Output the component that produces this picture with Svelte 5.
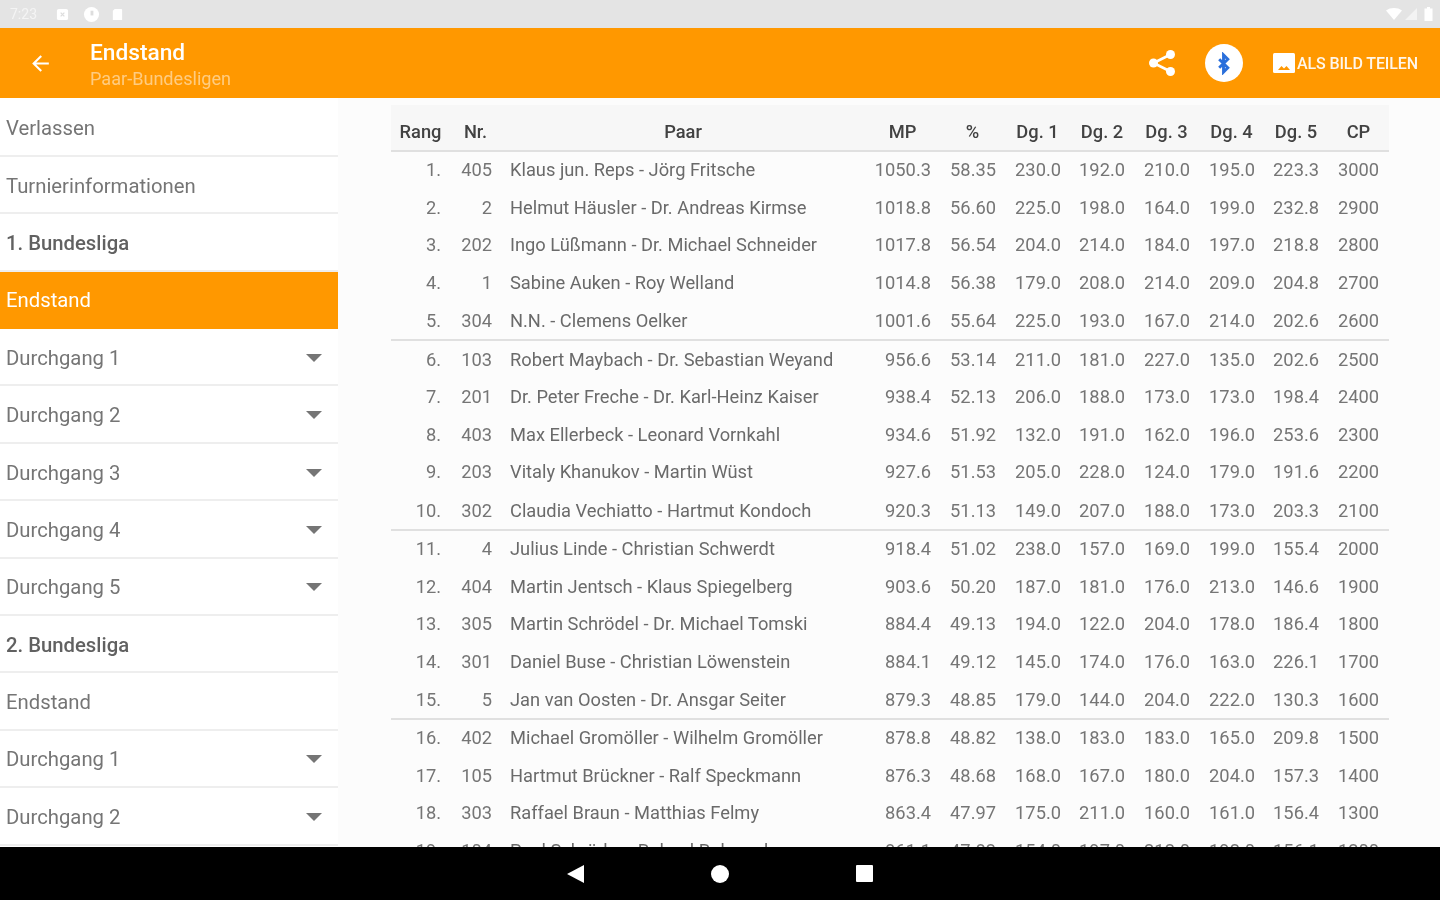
<script>
  const nav = [
    { t: 'Verlassen' },
    { t: 'Turnierinformationen' },
    { t: '1. Bundesliga', bold: true },
    { t: 'Endstand', active: true },
    { t: 'Durchgang 1', more: true },
    { t: 'Durchgang 2', more: true },
    { t: 'Durchgang 3', more: true },
    { t: 'Durchgang 4', more: true },
    { t: 'Durchgang 5', more: true },
    { t: '2. Bundesliga', bold: true },
    { t: 'Endstand' },
    { t: 'Durchgang 1', more: true },
    { t: 'Durchgang 2', more: true }
  ];
  const head = ['Rang', 'Nr.', 'Paar', 'MP', '%', 'Dg. 1', 'Dg. 2', 'Dg. 3', 'Dg. 4', 'Dg. 5', 'CP'];
  const rows = [
    ['1.', '405', 'Klaus jun. Reps - Jörg Fritsche', '1050.3', '58.35', '230.0', '192.0', '210.0', '195.0', '223.3', '3000'],
    ['2.', '2', 'Helmut Häusler - Dr. Andreas Kirmse', '1018.8', '56.60', '225.0', '198.0', '164.0', '199.0', '232.8', '2900'],
    ['3.', '202', 'Ingo Lüßmann - Dr. Michael Schneider', '1017.8', '56.54', '204.0', '214.0', '184.0', '197.0', '218.8', '2800'],
    ['4.', '1', 'Sabine Auken - Roy Welland', '1014.8', '56.38', '179.0', '208.0', '214.0', '209.0', '204.8', '2700'],
    ['5.', '304', 'N.N. - Clemens Oelker', '1001.6', '55.64', '225.0', '193.0', '167.0', '214.0', '202.6', '2600'],
    ['6.', '103', 'Robert Maybach - Dr. Sebastian Weyand', '956.6', '53.14', '211.0', '181.0', '227.0', '135.0', '202.6', '2500'],
    ['7.', '201', 'Dr. Peter Freche - Dr. Karl-Heinz Kaiser', '938.4', '52.13', '206.0', '188.0', '173.0', '173.0', '198.4', '2400'],
    ['8.', '403', 'Max Ellerbeck - Leonard Vornkahl', '934.6', '51.92', '132.0', '191.0', '162.0', '196.0', '253.6', '2300'],
    ['9.', '203', 'Vitaly Khanukov - Martin Wüst', '927.6', '51.53', '205.0', '228.0', '124.0', '179.0', '191.6', '2200'],
    ['10.', '302', 'Claudia Vechiatto - Hartmut Kondoch', '920.3', '51.13', '149.0', '207.0', '188.0', '173.0', '203.3', '2100'],
    ['11.', '4', 'Julius Linde - Christian Schwerdt', '918.4', '51.02', '238.0', '157.0', '169.0', '199.0', '155.4', '2000'],
    ['12.', '404', 'Martin Jentsch - Klaus Spiegelberg', '903.6', '50.20', '187.0', '181.0', '176.0', '213.0', '146.6', '1900'],
    ['13.', '305', 'Martin Schrödel - Dr. Michael Tomski', '884.4', '49.13', '194.0', '122.0', '204.0', '178.0', '186.4', '1800'],
    ['14.', '301', 'Daniel Buse - Christian Löwenstein', '884.1', '49.12', '145.0', '174.0', '176.0', '163.0', '226.1', '1700'],
    ['15.', '5', 'Jan van Oosten - Dr. Ansgar Seiter', '879.3', '48.85', '179.0', '144.0', '204.0', '222.0', '130.3', '1600'],
    ['16.', '402', 'Michael Gromöller - Wilhelm Gromöller', '878.8', '48.82', '138.0', '183.0', '183.0', '165.0', '209.8', '1500'],
    ['17.', '105', 'Hartmut Brückner - Ralf Speckmann', '876.3', '48.68', '168.0', '167.0', '180.0', '204.0', '157.3', '1400'],
    ['18.', '303', 'Raffael Braun - Matthias Felmy', '863.4', '47.97', '175.0', '211.0', '160.0', '161.0', '156.4', '1300'],
    ['19.', '104', 'Paul Schröder - Roland Rohowsky', '861.1', '47.83', '154.0', '197.0', '212.0', '192.0', '156.1', '1200']
  ];
</script>

<div class="frame">
<div class="screen">
  <header class="status">
    <div class="status-left">
      <span class="time">7:23</span>
      <svg class="s-icon" viewBox="0 0 14 14"><rect x="1" y="1" width="12" height="12" rx="2" fill="#fff"/><path d="M5 5l4 4M9 5l-4 4" stroke="#ddd" stroke-width="1.4"/></svg>
      <svg class="s-icon wide" viewBox="0 0 18 18"><circle cx="9" cy="9" r="8" fill="#fff"/><path d="M8 5h3v5H8z" fill="#ddd"/></svg>
      <svg class="s-icon" viewBox="0 0 14 14"><path d="M4 1h7a1 1 0 0 1 1 1v11H2V3z" fill="#fff"/></svg>
    </div>
    <div class="status-right">
      <svg class="wifi" viewBox="0 0 16 12"><path d="M0 2.500C4.500-.8 11.500-.8 16 2.500L8 12z" fill="#fff"/></svg>
      <svg class="signal" viewBox="0 0 12 12"><path d="M0 12L12 0v12z" fill="#fff" opacity=".55"/></svg>
      <svg class="battery" viewBox="0 0 9 14"><path d="M3 0h3v1.500h2.500V14H.5V1.500H3z" fill="#fff"/></svg>
    </div>
  </header>

  <header class="toolbar">
    <svg class="back" viewBox="0 0 24 24"><path d="M20 11H7.830l5.590-5.590L12 4l-8 8 8 8 1.410-1.410L7.830 13H20z" fill="#fff"/></svg>
    <div class="titles">
      <div class="title">Endstand</div>
      <div class="subtitle">Paar-Bundesligen</div>
    </div>
    <div class="actions">
      <svg class="share" viewBox="0 0 30 30"><path d="M23.500 6.500L6.500 15l17 8.500" fill="none" stroke="#fff" stroke-width="2.600"/><circle cx="23.500" cy="6.500" r="4.500" fill="#fff"/><circle cx="6.500" cy="15" r="4.500" fill="#fff"/><circle cx="23.500" cy="23.500" r="4.500" fill="#fff"/></svg>
      <span class="bt">
        <svg viewBox="0 0 24 24"><path d="M7.500 7.500l9 9-4.500 4.500V3l4.500 4.500-9 9" fill="none" stroke="#2a6fdb" stroke-width="3"/></svg>
      </span>
      <div class="as-image">
        <svg viewBox="0 0 24 24"><rect x="1" y="2" width="22" height="20" rx="1.500" fill="#fff"/><path d="M6 19l3.500-4 2.500 2.500 2.500-2.500 3.500 4z" fill="#ff9800"/></svg>
        <span>ALS BILD TEILEN</span>
      </div>
    </div>
  </header>

  <main class="body">
    <nav class="side">
      {#each nav as item}
        <div class="item" class:bold={item.bold} class:active={item.active}>
          <span>{item.t}</span>
          {#if item.more}<i class="caret"></i>{/if}
        </div>
      {/each}
    </nav>
    <section class="content">
      <div class="table">
        <div class="row headrow">
          {#each head as h}<div class="cell">{h}</div>{/each}
        </div>
        {#each rows as r, i}
          <div class="row" class:group={(i + 1) % 5 === 0}>
            {#each r as c, j}<div class="cell" class:name={j === 2}>{c}</div>{/each}
          </div>
        {/each}
      </div>
    </section>
  </main>

  <footer class="sysnav">
    <svg class="tri" viewBox="0 0 18 18"><path d="M17 0v18L0 9z" fill="#fff"/></svg>
    <i class="dot"></i>
    <i class="sq"></i>
  </footer>
</div>
</div>

<style>
  :global(body) { margin: 0; background: #fcfcfc; }
  .frame { width: 1440px; height: 900px; overflow: hidden; }
  .screen {
    width: 1448px; height: 908px; margin: -4px; display: flex; flex-direction: column; overflow: hidden;
    font-family: Roboto, "Liberation Sans", sans-serif; filter: blur(0.65px);
  }
  .status {
    height: 32px; flex: none; box-sizing: border-box; background: #e4e4e4;
    display: flex; justify-content: space-between; align-items: center; padding: 4px 11px 0 14px;
  }
  .status-left, .status-right { display: flex; align-items: center; }
  .time { color: #fff; font-size: 14px; width: 46px; opacity: .6; }
  .s-icon { width: 13px; height: 13px; margin-right: 14px; }
  .s-icon.wide { width: 17px; height: 17px; margin-right: 11px; }
  .wifi { width: 16px; height: 12px; margin-right: 3px; }
  .signal { width: 12px; height: 12px; margin-right: 7px; }
  .battery { width: 9px; height: 14px; }

  .toolbar {
    height: 70px; flex: none; background: #ff9800; display: flex; align-items: center;
    color: #fff; box-sizing: border-box; padding: 0 26px 0 32px;
  }
  .back { width: 25px; height: 25px; margin-top: 1px; }
  .titles { margin-left: 37px; flex: 1; padding-top: 7px; }
  .title { font-size: 22.700px; font-weight: 500; line-height: 26px; margin-top: -3px; }
  .subtitle { font-size: 18.100px; line-height: 24px; color: rgba(255,255,255,.5); margin-top: 1px; }
  .actions { display: flex; align-items: center; }
  .share { width: 30px; height: 30px; }
  .bt {
    width: 38px; height: 38px; border-radius: 50%; background: #fff; margin-left: 28px;
    display: flex; align-items: center; justify-content: center;
  }
  .bt svg { width: 23px; height: 23px; }
  .as-image { display: flex; align-items: center; margin-left: 29px; font-size: 16px; font-weight: 500; letter-spacing: -.1px; }
  .as-image svg { width: 24px; height: 24px; margin-right: 1px; }
  .as-image span { opacity: .92; }

  .body { flex: 1; min-height: 0; display: flex; overflow: hidden; background: #fcfcfc; }
  .side { width: 342px; flex: none; background: #fff; padding-top: 1.500px; }
  .item {
    height: 57.400px; box-sizing: border-box; display: flex; align-items: center; justify-content: space-between;
    padding: 2px 16px 0 10px; font-size: 20.300px; color: #757575; border-bottom: 2px solid #eee;
  }
  .item.bold { font-weight: 500; color: #616161; }
  .item.active { background: #ff9800; color: #fff; border-bottom-color: #ff9800; }
  .caret {
    width: 0; height: 0; border-left: 8px solid transparent; border-right: 8px solid transparent;
    border-top: 8px solid #757575;
  }

  .content { flex: 1; padding: 7px 0 0 53px; min-width: 0; }
  .table { width: 998px; }
  .row {
    display: grid; grid-template-columns: 59px 51px 364px 75px 65px 65px 64px 65px 65px 64px 61px;
    height: 37.500px; align-items: center; font-size: 18.300px; color: #757575;
    white-space: nowrap; box-sizing: border-box; padding-bottom: 2px;
  }
  .row.group { height: 39.400px; border-bottom: 2px solid #e0e0e0; padding-bottom: 0; }
  .cell { text-align: right; padding-right: 9px; }
  .cell:last-child { padding-right: 10px; }
  .cell.name { text-align: left; padding: 0 0 0 9px; color: #6a6a6a; }
  .headrow {
    height: 47px; background: #f7f7f7; border-bottom: 2px solid #e0e0e0;
    font-weight: 500; color: #424242; padding-top: 7px; padding-bottom: 0;
  }
  .headrow .cell { text-align: center; padding: 0; }

  .sysnav {
    height: 57px; flex: none; background: #000; display: flex; align-items: center; justify-content: center;
    position: relative; padding: 0 1px 4px 0; box-sizing: border-box;
  }
  .tri { width: 18px; height: 18px; }
  .dot { width: 18px; height: 18px; border-radius: 50%; background: #fff; margin-left: 126px; }
  .sq { width: 17px; height: 17px; border-radius: 1px; background: #fff; margin-left: 127px; }
</style>
